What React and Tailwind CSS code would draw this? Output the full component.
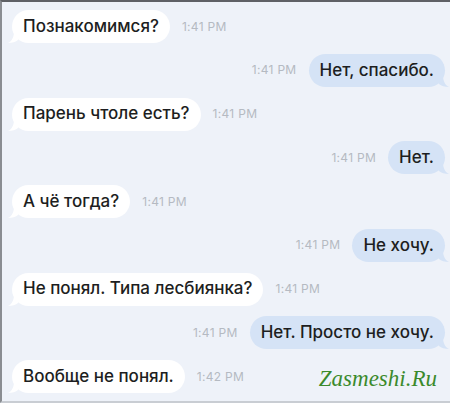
import React from 'react';

const messages = [
  { id: 1, out: false, text: 'Познакомимся?', time: '1:41 PM' },
  { id: 2, out: true, text: 'Нет, спасибо.', time: '1:41 PM' },
  { id: 3, out: false, text: 'Парень чтоле есть?', time: '1:41 PM' },
  { id: 4, out: true, text: 'Нет.', time: '1:41 PM' },
  { id: 5, out: false, text: 'А чё тогда?', time: '1:41 PM' },
  { id: 6, out: true, text: 'Не хочу.', time: '1:41 PM' },
  { id: 7, out: false, text: 'Не понял. Типа лесбиянка?', time: '1:41 PM' },
  { id: 8, out: true, text: 'Нет. Просто не хочу.', time: '1:41 PM' },
  { id: 9, out: false, text: 'Вообще не понял.', time: '1:42 PM' },
];

function Tail({ out }) {
  if (out) {
    return (
      <svg className="absolute -right-[4px] bottom-0 w-[10px] h-[12px]" viewBox="0 0 10 12">
        <path d="M4 0 C4 6 6 10 10 12 C6 12 2 11 0 9 L0 0 Z" fill="#d5e3f6" />
      </svg>
    );
  }
  return (
    <svg className="absolute -left-[4px] bottom-0 w-[10px] h-[12px]" viewBox="0 0 10 12">
      <path d="M6 0 C6 6 4 10 0 12 C4 12 8 11 10 9 L10 0 Z" fill="#ffffff" />
    </svg>
  );
}

function Time({ children }) {
  return <span className="text-[12px] text-[#b5bac2] tracking-[0.3px]">{children}</span>;
}

export default function App() {
  return (
    <div
      className="w-[450px] h-[403px] overflow-hidden bg-[#eef2f9] border-t-2 border-l-2 border-b-2 border-t-[#5f6166] border-l-[#8a8d92] border-b-[#c9cdd3] relative"
      style={{ fontFamily: 'Inter, "Noto Sans", sans-serif' }}
    >
      <div className="flex flex-col gap-[10.75px] pt-[8px] pl-[10px] pr-[5px]">
        {messages.map(m => (
          <div
            key={m.id}
            className={`flex items-center gap-[12px] h-[33px] ${m.out ? 'justify-end' : 'justify-start'}`}
          >
            {m.out && <Time>{m.time}</Time>}
            <div
              className={`relative h-[33px] flex items-center px-[11px] rounded-[17px] text-[17px] font-[450] text-[#1d1e21] ${
                m.out ? 'bg-[#d5e3f6]' : 'bg-white'
              }`}
            >
              <Tail out={m.out} />
              <span className="relative">{m.text}</span>
            </div>
            {!m.out && <Time>{m.time}</Time>}
            {m.id === 9 && (
              <span
                className="ml-auto mr-[8px] mt-[5px] text-[23px] italic text-[#3b8a2c]"
                style={{ fontFamily: '"Liberation Serif", serif' }}
              >
                Zasmeshi.Ru
              </span>
            )}
          </div>
        ))}
      </div>
    </div>
  );
}
